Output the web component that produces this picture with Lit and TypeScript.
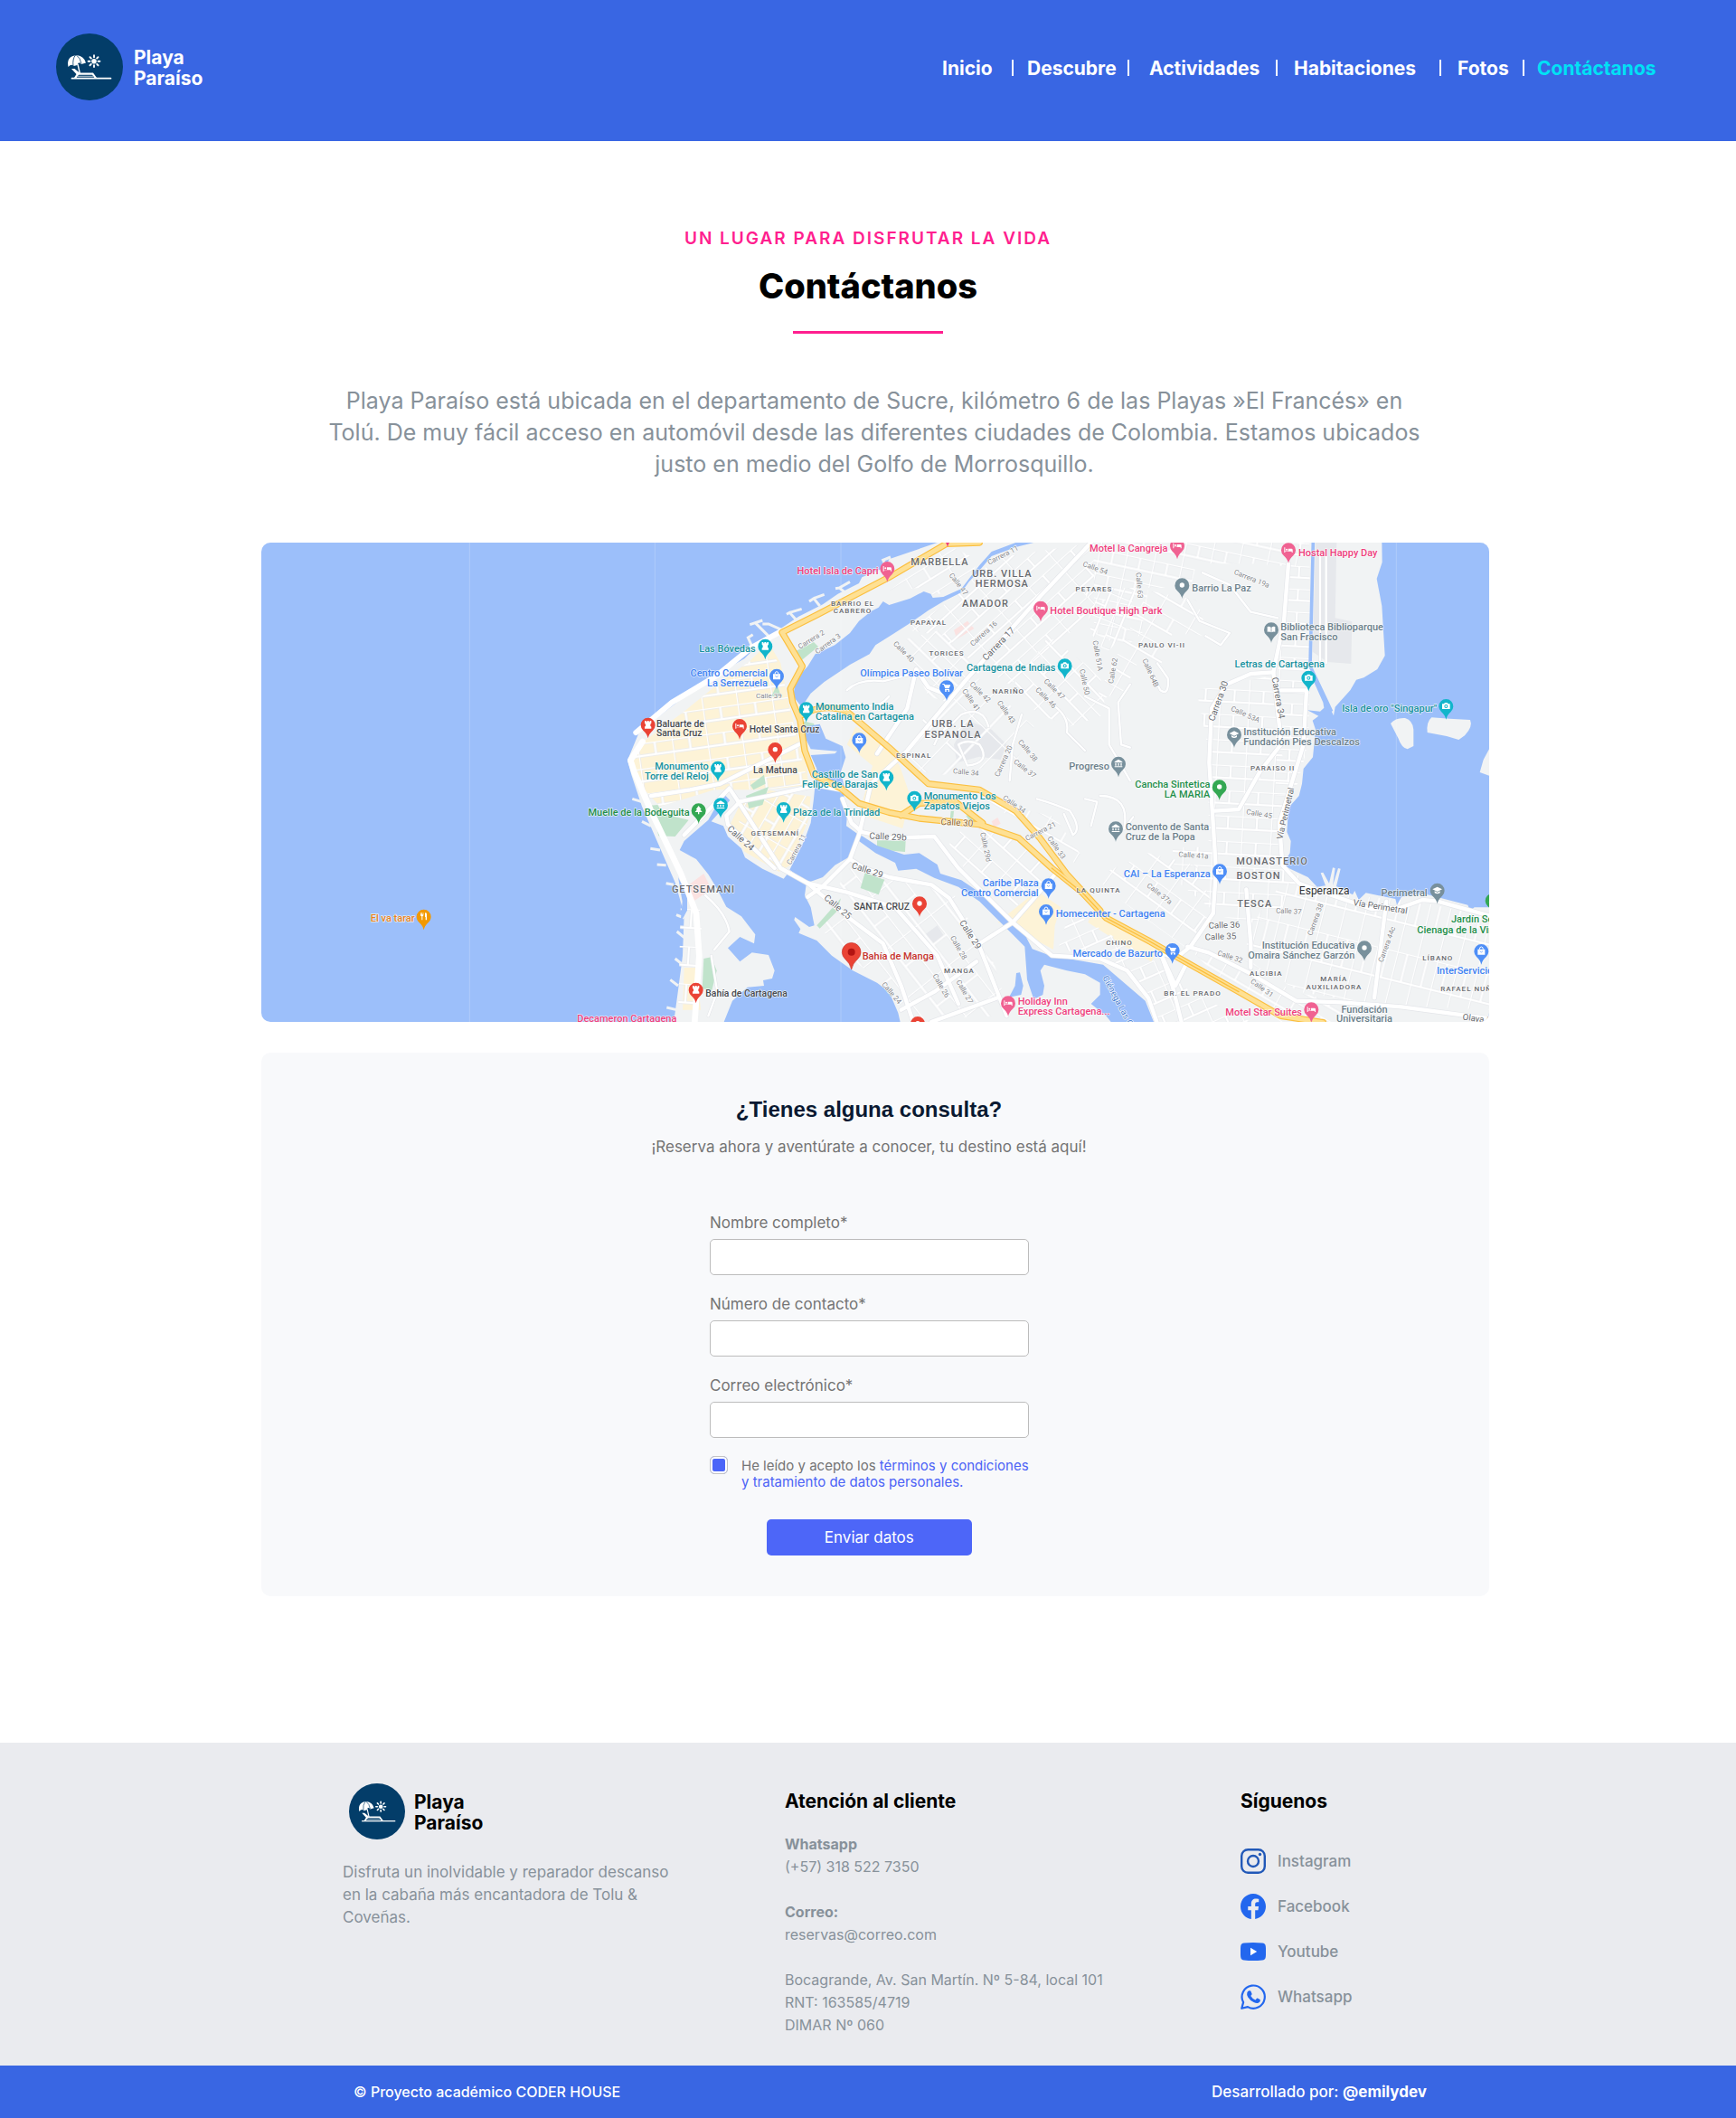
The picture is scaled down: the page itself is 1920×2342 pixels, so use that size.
import { LitElement, html, css, svg, nothing } from "lit";
import { customElement } from "lit/decorators.js";

/* ---------- Map data (map units: three per CSS pixel) ---------- */

const INK = {
  pink: "#ef3f7c",
  teal: "#16919e",
  blue: "#3f82f2",
  slate: "#6b7f8a",
  green: "#1e8e4a",
  red: "#c5322b",
  orange: "#e8811a",
  dark: "#47494d",
  area: "#67696e",
  street: "#85878c",
  sea: "#4a7fd0",
  brown: "#8b6430",
};

type Glyph = "bed" | "tower" | "bag" | "cart" | "camera" | "tree" | "dot" | "cap" | "book" | "museum" | "fork";

const PINS: [number, number, string, Glyph][] = [
  [694, 116, "#f06292", "bed"],
  [289, 373, "#12b5cb", "tower"],
  [327, 472, "#4f8ff7", "bag"],
  [425, 582, "#12b5cb", "tower"],
  [204, 638, "#ea4335", "bed"],
  [322, 716, "#ea4335", "dot"],
  [132, 778, "#12b5cb", "tower"],
  [601, 684, "#4f8ff7", "bag"],
  [691, 808, "#12b5cb", "tower"],
  [891, 510, "#4f8ff7", "cart"],
  [1203, 247, "#f06292", "bed"],
  [1283, 438, "#12b5cb", "camera"],
  [68, 918, "#34a853", "tree"],
  [141, 900, "#12b5cb", "museum"],
  [350, 914, "#12b5cb", "tower"],
  [784, 877, "#12b5cb", "camera"],
  [1229, 1167, "#4f8ff7", "bag"],
  [1221, 1253, "#4f8ff7", "bag"],
  [801, 1227, "#ea4335", "dot"],
  [59, 1513, "#ea4335", "tower"],
  [1095, 1557, "#f06292", "bed"],
  [795, 1625, "#ea4335", "dot"],
  [1656, 40, "#f06292", "bed"],
  [2025, 54, "#f06292", "bed"],
  [1672, 171, "#78909c", "dot"],
  [1968, 318, "#78909c", "book"],
  [2092, 478, "#12b5cb", "camera"],
  [1845, 666, "#78909c", "cap"],
  [2548, 572, "#12b5cb", "camera"],
  [1461, 763, "#78909c", "museum"],
  [1796, 840, "#34a853", "dot"],
  [1452, 978, "#78909c", "museum"],
  [1797, 1119, "#4f8ff7", "bag"],
  [2519, 1183, "#78909c", "cap"],
  [2702, 1217, "#34a853", "tree"],
  [2277, 1374, "#78909c", "dot"],
  [2665, 1385, "#4f8ff7", "bag"],
  [1640, 1382, "#4f8ff7", "cart"],
  [2101, 1578, "#f06292", "bed"],
  [-100, 634, "#ea4335", "tower"],
  [-844, 1270, "#f29900", "fork"],
  [894, 0, "#ef3f7c", "dot"],
];

/* Place names: text, x, baseline, colour, anchor */
const PLACES: [string, number, number, string, string][] = [
  ["Hotel Isla de Capri", 665, 135, INK.pink, "end"],
  ["Las Bóvedas", 257, 392, INK.teal, "end"],
  ["Centro Comercial", 297, 475, INK.blue, "end"],
  ["La Serrezuela", 297, 507, INK.blue, "end"],
  ["Monumento India", 456, 586, INK.teal, "start"],
  ["Catalina en Cartagena", 456, 618, INK.teal, "start"],
  ["Hotel Santa Cruz", 236, 661, INK.dark, "start"],
  ["Baluarte de", -72, 641, INK.dark, "start"],
  ["Santa Cruz", -72, 673, INK.dark, "start"],
  ["La Matuna", 322, 794, INK.dark, "middle"],
  ["Monumento", 101, 782, INK.teal, "end"],
  ["Torre del Reloj", 101, 816, INK.teal, "end"],
  ["Castillo de San", 663, 811, INK.teal, "end"],
  ["Felipe de Barajas", 663, 843, INK.teal, "end"],
  ["Olímpica Paseo Bolívar", 945, 473, INK.blue, "end"],
  ["Cartagena de Indias", 1252, 457, INK.teal, "end"],
  ["Hotel Boutique High Park", 1234, 266, INK.pink, "start"],
  ["Muelle de la Bodeguita", 38, 937, INK.green, "end"],
  ["Plaza de la Trinidad", 381, 935, INK.teal, "start"],
  ["Monumento Los", 815, 881, INK.teal, "start"],
  ["Zapatos Viejos", 815, 915, INK.teal, "start"],
  ["Caribe Plaza", 1196, 1171, INK.blue, "end"],
  ["Centro Comercial", 1196, 1204, INK.blue, "end"],
  ["Homecenter - Cartagena", 1253, 1273, INK.blue, "start"],
  ["SANTA CRUZ", 768, 1248, INK.dark, "end"],
  ["Bahía de Manga", 611, 1413, INK.red, "start"],
  ["Bahía de Cartagena", 91, 1536, INK.dark, "start"],
  ["Holiday Inn", 1127, 1562, INK.pink, "start"],
  ["Express Cartagena...", 1127, 1595, INK.pink, "start"],
  ["Mercado de Bazurto", 1608, 1404, INK.blue, "end"],
  ["Motel la Cangreja", 1624, 61, INK.pink, "end"],
  ["Hostal Happy Day", 2058, 76, INK.pink, "start"],
  ["Barrio La Paz", 1705, 191, INK.slate, "start"],
  ["Biblioteca Biblioparque", 1999, 322, INK.slate, "start"],
  ["San Fracisco", 1999, 355, INK.slate, "start"],
  ["Letras de Cartagena", 2145, 444, INK.teal, "end"],
  ["Isla de oro \"Singapur\"", 2518, 591, INK.teal, "end"],
  ["Institución Educativa", 1876, 669, INK.slate, "start"],
  ["Fundación Pies Descalzos", 1876, 703, INK.slate, "start"],
  ["Progreso", 1431, 784, INK.slate, "end"],
  ["Cancha Sintetica", 1765, 843, INK.green, "end"],
  ["LA MARIA", 1765, 876, INK.green, "end"],
  ["Convento de Santa", 1484, 983, INK.slate, "start"],
  ["Cruz de la Popa", 1484, 1016, INK.slate, "start"],
  ["CAI – La Esperanza", 1766, 1139, INK.blue, "end"],
  ["Perimetral", 2486, 1203, INK.slate, "end"],
  ["Jardín Sec", 2565, 1291, INK.green, "start"],
  ["Cienaga de la Virgen", 2452, 1326, INK.green, "start"],
  ["Institución Educativa", 2245, 1377, INK.slate, "end"],
  ["Omaira Sánchez Garzón", 2245, 1409, INK.slate, "end"],
  ["InterServicios", 2517, 1461, INK.blue, "start"],
  ["Motel Star Suites", 2070, 1600, INK.pink, "end"],
  ["Fundación", 2277, 1590, INK.slate, "middle"],
  ["Universitaria", 2277, 1620, INK.slate, "middle"],
  ["El va tarar", -874, 1287, INK.orange, "end"],
  ["Decameron Cartagena", -5, 1620, INK.pink, "end"],
];

/* District names: text, centre x, baseline, size */
const AREAS: [string, number, number, number][] = [
  ["MARBELLA", 868, 106, 33],
  ["URB. VILLA", 1075, 143, 33],
  ["HERMOSA", 1075, 178, 33],
  ["AMADOR", 1020, 242, 33],
  ["BARRIO EL", 579, 239, 24],
  ["CABRERO", 579, 264, 24],
  ["PAPAYAL", 831, 304, 24],
  ["TORICES", 891, 405, 24],
  ["NARIÑO", 1096, 531, 24],
  ["URB. LA", 912, 642, 33],
  ["ESPANOLA", 912, 677, 33],
  ["ESPINAL", 782, 745, 24],
  ["PETARES", 1380, 193, 24],
  ["PAULO VI-II", 1605, 379, 24],
  ["GETSEMANÍ", 322, 1001, 24],
  ["GETSEMANI", 84, 1191, 33],
  ["MANGA", 933, 1458, 24],
  ["LA QUINTA", 1395, 1192, 24],
  ["CHINO", 1464, 1365, 24],
  ["BR. EL PRADO", 1707, 1533, 24],
  ["PARAISO II", 1973, 785, 24],
  ["MONASTERIO", 1971, 1098, 33],
  ["BOSTON", 1926, 1146, 33],
  ["TESCA", 1913, 1240, 33],
  ["ALCIBIA", 1951, 1466, 24],
  ["MARÍA", 2176, 1485, 24],
  ["AUXILIADORA", 2176, 1511, 24],
  ["LÍBANO", 2521, 1416, 24],
  ["RAFAEL NUÑEZ", 2632, 1518, 24],
];

/* Street names: text, centre x, centre y, angle, size, colour */
const STREETS: [string, number, number, number, number, string][] = [
  ["Carrera 11", 1078, 72, -27, 24, INK.street],
  ["Calle 47", 930, 168, 52, 24, INK.street],
  ["Carrera 2", 442, 352, -32, 24, INK.street],
  ["Carrera 3", 497, 366, -36, 24, INK.street],
  ["Calle 39", 301, 539, 0, 24, INK.street],
  ["Calle 40", 748, 392, 45, 24, INK.street],
  ["Carrera 16", 1014, 332, -42, 24, INK.street],
  ["Carrera 17", 1063, 366, -46, 30, INK.area],
  ["Calle 50", 1348, 492, 78, 24, INK.street],
  ["Calle 47", 1248, 516, 45, 24, INK.street],
  ["Calle 46", 1220, 545, 45, 24, INK.street],
  ["Calle 42", 1002, 526, 45, 24, INK.street],
  ["Calle 41", 972, 553, 55, 24, INK.street],
  ["Calle 43", 1088, 592, 55, 24, INK.street],
  ["Calle 38", 1160, 720, 50, 24, INK.street],
  ["Calle 37", 1150, 780, 38, 24, INK.street],
  ["Carrera 20", 1080, 755, -66, 24, INK.street],
  ["Calle 34", 955, 792, 6, 24, INK.street],
  ["Calle 54", 1384, 115, 20, 24, INK.street],
  ["Calle 63", 1530, 172, 86, 24, INK.street],
  ["Carrera 19a", 1903, 150, 22, 24, INK.street],
  ["Calle 51A", 1392, 405, 80, 24, INK.street],
  ["Calle 62", 1443, 455, -80, 24, INK.street],
  ["Calle 64B", 1567, 462, 66, 24, INK.street],
  ["Carrera 30", 1792, 555, -70, 30, INK.area],
  ["Carrera 34", 1992, 545, 80, 30, INK.area],
  ["Calle 53A", 1882, 600, 24, 24, INK.street],
  ["Calle 24", 208, 1010, 42, 30, INK.area],
  ["Carrera 11", 393, 1048, -62, 24, INK.street],
  ["Calle 29b", 696, 1005, 3, 30, INK.area],
  ["Calle 29", 628, 1116, 18, 30, INK.area],
  ["Calle 25", 530, 1238, 40, 30, INK.area],
  ["Calle 30", 925, 958, 3, 30, INK.brown],
  ["Calle 34", 1115, 898, 35, 24, INK.street],
  ["Carrera 21", 1203, 988, -27, 24, INK.street],
  ["Calle 33", 1255, 1042, 55, 24, INK.street],
  ["Calle 29d", 1020, 1040, 78, 24, INK.street],
  ["Calle 29", 970, 1330, 58, 30, INK.area],
  ["Calle 28", 930, 1374, 60, 24, INK.street],
  ["Calle 27", 950, 1520, 60, 24, INK.street],
  ["Calle 26", 872, 1500, 60, 24, INK.street],
  ["Calle 24", 708, 1524, 50, 24, INK.street],
  ["Calle 45", 1928, 930, 10, 24, INK.street],
  ["Vía Perimetral", 2014, 928, -77, 28, INK.area],
  ["Calle 41a", 1710, 1068, 4, 24, INK.street],
  ["Calle 37a", 1597, 1195, 38, 24, INK.street],
  ["Calle 37", 2026, 1253, 3, 24, INK.street],
  ["Calle 36", 1812, 1298, -2, 29, INK.area],
  ["Calle 35", 1800, 1336, -2, 29, INK.area],
  ["Calle 32", 1831, 1404, 18, 24, INK.street],
  ["Calle 31", 1937, 1508, 36, 24, INK.street],
  ["Carrera 38", 2115, 1280, -70, 24, INK.street],
  ["Vía Perimetral", 2330, 1237, 9, 29, INK.area],
  ["Carrera 44c", 2352, 1363, -70, 24, INK.street],
  ["Ciénega Las Quintas", 1479, 1585, 62, 29, INK.sea],
  ["Olaya Herrera", 2690, 1614, 8, 29, INK.area],
  ["Esperanza", 2144, 1186, 0, 36, "#2f3134"],
];

const WATER = [
  "M1180 30L1120 30L1040 60L1000 105L965 150L940 183L880 210L845 213L838 200L815 192L770 215L700 237L680 225L665 245L640 258L600 290L570 330L520 370L455 400L430 440L390 485L382 540L410 575L440 530L485 492L540 455L570 435L635 400L655 370L710 335L765 300L830 255L880 225L940 195L965 160L1000 122L1040 75L1120 45Z",
  "M425 640L470 632L490 680L545 705L556 742L540 790L552 845L550 880L562 920L558 970L600 1000L572 1070L520 1100L480 1140L430 1158L370 1115L418 1020L440 960L450 880L460 780L440 735L520 730L528 722L440 715L418 670Z",
  "M150 862L172 885L110 955L150 970L165 1005L210 1045L222 1075L280 1112L350 1145L366 1125L425 1165L420 1200L440 1240L452 1300L435 1305L388 1272L385 1282L406 1312L400 1325L460 1350L510 1400L580 1450L660 1490L700 1520L730 1590L738 1625L150 1625L180 1550L230 1505L285 1500L282 1482L312 1476L320 1450L300 1398L245 1390L205 1420L165 1375L205 1338L252 1360L256 1330L210 1270L160 1238L130 1180L100 1130L60 1080L5 1050L20 1020L100 950Z",
  "M605 1000L660 1035L750 1065L800 1060L860 1098L870 1128L940 1150L1000 1190L1050 1230L1105 1280L1145 1320L1175 1378L1235 1400L1350 1420L1410 1430L1480 1490L1550 1550L1580 1625L1440 1625L1420 1600L1370 1560L1400 1530L1400 1490L1350 1462L1290 1450L1215 1430L1202 1450L1215 1500L1210 1530L1180 1545L1158 1480L1150 1370L1110 1330L1060 1280L1000 1220L930 1172L850 1142L790 1112L730 1118L720 1092L655 1060L600 1020Z",
  "M1122 1458L1134 1456L1145 1500L1138 1530L1098 1538L1118 1500Z",
  "M2335 30L2336 95L2318 150L2335 240L2345 405L2320 450L2275 478L2250 485L2230 520L2180 575L2175 604L2110 470L2098 430L2104 480L2140 560L2143 578L2130 590L2088 586L2125 605L2105 620L2115 650L2106 742L2075 780L2070 830L2060 870L2025 910L2020 990L2033 1020L2030 1060L2005 1100L2090 1140L2120 1172L2148 1168L2132 1126L2140 1124L2160 1160L2172 1108L2180 1110L2172 1168L2190 1110L2198 1112L2184 1170L2238 1198L2245 1185L2258 1215L2282 1192L2380 1212L2385 1232L2400 1205L2470 1193L2620 1232L2628 1252L2642 1240L2700 1240L2700 30Z",
  "M0 1140L30 1200L30 1250L8 1290L14 1220Z",
];

const YELLOW = [
  "M300 362L340 430L362 540L390 650L425 760L432 835L280 850L120 850L-60 905L-112 850L-152 760L-112 688L20 590L150 485L235 425Z",
  "M290 850L440 872L432 950L372 1100L335 1122L220 1055L170 970L205 900Z",
  "M590 640L690 705L735 770L770 870L745 978L600 930L645 770L560 700Z",
  "M1060 1290L1190 1185L1270 1240L1250 1300L1245 1380L1190 1350L1110 1300Z",
  "M1380 1240L1600 1360L1570 1420L1500 1380L1360 1290Z",
  "M20 1440L62 1440L75 1580L15 1580Z",
];

const GREEN = [
  "M-92 902L-68 900L-50 930L35 950L-10 1005L-65 1003Z",
  "M225 870L300 840L280 900L235 912Z",
  "M310 540L328 500L342 540Z",
  "M390 390L450 360L465 375L410 420Z",
  "M405 620L450 630L455 645L415 660Z",
  "M620 1125L685 1148L665 1198L605 1176Z",
  "M660 1018L755 1018L753 1056L660 1048Z",
  "M460 1300L540 1210L530 1250L470 1310Z",
  "M85 1410L110 1405L128 1450L112 1515L80 1510Z",
  "M240 835L285 800L290 830L250 850Z",
  "M905 920L915 920L912 950L902 950Z",
  "M955 935L985 930L1000 960L965 950Z",
];

const ROSE = ["M915 320L960 290L982 315L925 350Z", "M15 1180L85 1128L110 1180L50 1220Z", "M1040 955L1060 942L1070 962L1048 975Z"];

const GREY = [
  "M2115 30L2185 30L2180 280L2236 292L2233 432L2155 426L2105 392Z",
  "M960 620L1040 650L1090 700L1070 750L1000 740L925 760L915 700Z",
  "M820 1330L860 1300L885 1340L850 1360Z",
];

/* Street grids: polygon, angle, cell width, cell height */
const GRIDS: [string, number, number, number][] = [
  ["M700 190L900 40L1000 90L940 180L850 205L800 180Z", -32, 70, 44],
  ["M760 320L900 225L1000 130L1060 80L1380 30L1380 250L1230 400L1100 500L980 430L880 340Z", -42, 62, 38],
  ["M720 360L870 320L1000 460L900 560L830 540L790 450Z", 44, 60, 40],
  ["M300 380L340 440L362 540L395 690L432 830L280 850L120 850L-60 905L-112 850L-152 760L-112 688L20 590L150 485L235 425Z", -8, 58, 42],
  ["M290 850L440 872L432 950L372 1100L335 1122L190 1000L220 890Z", -60, 52, 40],
  ["M560 1110L900 1170L1050 1430L1100 1600L760 1610L700 1500L600 1430L470 1310Z", 52, 84, 58],
  ["M1380 30L2090 30L2050 110L1900 100L1720 100L1700 180L1560 180L1540 330L1480 380L1380 330Z", 12, 46, 40],
  ["M1350 180L1520 180L1480 330L1420 400L1370 330Z", -68, 44, 36],
  ["M1560 190L1720 220L1760 340L1640 330L1600 440L1530 420L1480 520L1380 560Z", 30, 58, 48],
  ["M2040 30L2095 30L2098 430L2090 700L2055 830L1980 920L1990 460L2010 290Z", 3, 48, 38],
  ["M1720 520L1980 470L2000 720L2040 850L2000 1030L2010 1100L2080 1150L1950 1300L1800 1270L1650 1150L1640 1040L1760 1040L1760 720Z", 3, 48, 42],
  ["M2010 1150L2100 1190L2450 1220L2691 1270L2691 1580L2300 1560L2060 1520L1880 1400L1900 1300Z", 14, 34, 96],
  ["M1900 1420L2040 1520L2240 1560L2300 1620L2000 1620L1760 1440L1700 1380Z", 30, 52, 40],
  ["M1380 1140L1560 1060L1720 1100L1780 1250L1680 1370L1500 1240Z", 36, 48, 60],
  ["M1300 1250L1600 1430L1700 1520L1900 1620L1600 1620L1540 1500L1420 1400L1260 1380Z", -24, 48, 44],
  ["M960 960L1150 1010L1250 1130L1180 1180L1100 1260L960 1130L900 1030Z", 42, 60, 54],
  ["M1230 340L1400 470L1420 600L1300 640L1200 600L1100 520Z", 46, 62, 42],
  ["M820 600L1000 480L1180 640L1120 760L880 800L740 780Z", -46, 120, 70],
  ["M1000 880L1250 940L1380 1130L1260 1060L1140 960Z", 30, 70, 50],
  ["M10 1160L80 1260L60 1600L0 1600Z", 4, 44, 62],
];

const MINOR = [
  "M560 520Q600 480 680 490L760 470",
  "M590 560Q660 590 700 540",
  "M1560 440L1600 520Q1630 540 1625 480L1590 430",
  "M1500 500L1460 560L1470 700L1500 710",
  "M1740 130L1830 170L1900 260L1990 280",
  "M1690 220L1730 290L1830 330L1800 370L1750 340",
  "M1350 540L1430 580L1430 700L1500 820",
  "M1350 880L1390 890L1370 970",
  "M1400 870Q1500 870 1480 980L1510 940",
  "M1230 560Q1300 600 1290 660L1350 720",
  "M1140 600L1110 700L1100 820",
  "M1190 880Q1260 900 1300 920Q1340 980 1310 1000L1280 930",
  "M850 700Q870 650 900 640L940 600Q1010 570 1030 640",
  "M930 700Q960 680 1000 700Q1040 760 960 770Z",
  "M90 1200Q160 1260 170 1320L120 1380",
  "M100 1600L130 1520L110 1400",
  "M2130 60L2130 420M2150 60L2150 430",
];

const WHITE_MAJOR = [
  "M1370 30L1200 210L960 480L760 720L640 830L600 1000L570 1080L480 1170L430 1205",
  "M790 450L830 510L880 530M790 450L760 580L660 730",
  "M-90 870L40 850L140 830L300 750L400 700",
  "M200 890L300 870L460 835L540 850",
  "M20 1000L170 845L200 890L340 1110L430 1160L560 1270L680 1360L740 1500L780 1620",
  "M160 935L200 895M160 935L165 965L320 1110",
  "M545 880L575 960L610 990L700 1010L850 1005L930 1110L1110 1290L1240 1400L1400 1410L1490 1450L1560 1540L1590 1625",
  "M570 1080L620 1110L700 1140L840 1165L900 1210L1000 1370L1090 1600",
  "M430 1160L560 1190L720 1240L860 1400L930 1560",
  "M1000 1360L1110 1290L1260 1120",
  "M2025 100L2010 290L1975 460L1995 640L2000 700L1930 790L1860 915L1780 920",
  "M1775 1260L1785 1120L1775 960L1762 760L1770 580L1820 500L1900 465L1975 460",
  "M2000 520L2085 520L2075 700L1995 960L2005 1100L2060 1160L2140 1190L2300 1245L2400 1240L2470 1215L2520 1220L2700 1270",
  "M1775 1260L1700 1370L1650 1410L1600 1390L1650 1500L1690 1420L1720 1440",
  "M1690 1370L1760 1390L1900 1460L2050 1550L2200 1555L2400 1570L2700 1610",
  "M1885 1180L1900 1360L1900 1440",
  "M1600 1390L1640 1500L1670 1620",
  "M2350 1220L2310 1540",
  "M740 1580L850 1520L990 1420M840 1620L1060 1540",
];

const COAST_ROAD = "M-140 660L-20 560L130 470L240 380L340 325";
const WEST_ROAD = "M-118 690L-158 752L-146 790L-90 920L10 1130L60 1260L70 1400L55 1620";

const HIGHWAYS = [
  "M1000 30L890 34L700 145L460 270L345 328L412 440L372 515L380 560L405 620L420 720L450 800L540 845L600 895L700 925L800 945L1000 965L1130 1010L1240 1110L1340 1190L1420 1275L1560 1350L1700 1430L1860 1520L2000 1600L2140 1622",
  "M405 605Q480 560 560 590L700 710L830 830L1000 850L1120 920L1200 1010L1290 1130L1400 1250",
  "M740 935L800 895L920 890L1010 960",
];

const glyph = (kind: Glyph) => {
  switch (kind) {
    case "bed":
      return svg`<path d="M-14-8v17h3v-4h22v4h3v-9q0-4-4-4H-1V4H-11V-8z"/><circle cx="-6" cy="-1" r="3"/>`;
    case "tower":
      return svg`<path d="M-11-13h5v4h3v-4h6v4h3v-4h5v8l-3 3v6l3 3v6h-22v-6l3-3v-6l-3-3z"/>`;
    case "bag":
      return svg`<path d="M-12-6h24v18h-24z"/><path d="M-6-6q0-8 6-8t6 8" fill="none" stroke="#fff" stroke-width="3"/><path d="M-5 0q5 8 10 0" fill="none" stroke="#4f8ff7" stroke-width="2"/>`;
    case "cart":
      return svg`<path d="M-14-12h6l2 4H13L8 4H-5L-10-9h-4zM-6 6H9v3H-6z"/><circle cx="-3" cy="12" r="3"/><circle cx="7" cy="12" r="3"/>`;
    case "camera":
      return svg`<path d="M-13-7h6l3-4h8l3 4h6v17h-26z"/><circle cy="1" r="6" fill="#12b5cb"/><circle cy="1" r="3"/>`;
    case "tree":
      return svg`<path d="M0-15L9-3H5l7 9H2v7h-4V6h-10l7-9h-4z"/>`;
    case "cap":
      return svg`<path d="M0-11L16-3 0 5-16-3zM-9 3L0 8 9 3v6q-9 6-18 0z"/>`;
    case "book":
      return svg`<path d="M-13-9q8-2 12 2v17q-5-4-12-2zM13-9Q5-11 1-7v17q5-4 12-2z"/>`;
    case "museum":
      return svg`<path d="M0-14L13-6v3h-26v-3zM-11-1h4v8h-4zM-2-1h4v8h-4zM7-1h4v8H7zM-13 9h26v3h-26z"/>`;
    case "fork":
      return svg`<path d="M-11-12h2v6h2v-6h2v6h2v-6h2v8q0 3-3 4v12h-3V0q-4-1-4-4zM4-12q6 0 6 4v20H6V2H4z"/>`;
    default:
      return svg`<circle r="8"/>`;
  }
};

@customElement("location-map")
export class LocationMap extends LitElement {
  static styles = css`
    :host {
      display: block;
    }
    .map {
      display: block;
      width: 100%;
      height: auto;
      border-radius: 10px;
      font-family: Roboto, sans-serif;
    }
    .label {
      font-weight: 500;
    }
    .label,
    .area,
    .street {
      paint-order: stroke;
      stroke: #ffffff;
      stroke-opacity: 0.75;
      stroke-width: 4px;
      stroke-linejoin: round;
    }
    .area {
      letter-spacing: 3px;
      font-weight: 500;
      text-anchor: middle;
    }
    .street {
      text-anchor: middle;
      dominant-baseline: central;
      stroke-opacity: 0.9;
    }
    .roads {
      fill: none;
      stroke-linejoin: round;
      stroke-linecap: round;
    }
  `;

  render() {
    return html`
      <svg class="map" viewBox="-1383 30 4074 1590" role="img" aria-label="Mapa de Cartagena y Bahía de Manga">
        <defs>
          ${GRIDS.map(
            ([, angle, w, h], i) => svg`
            <pattern id="grid${i}" width=${w * 2} height=${h * 2} patternUnits="userSpaceOnUse" patternTransform="rotate(${angle})">
              <path d="M0 0H${w * 2}M0 ${h}H${w * 2}M0 0V${h * 2}M${w} 0V${h}" stroke="#e2e4e8" stroke-width="10" fill="none"/>
              <path d="M0 0H${w * 2}M0 ${h}H${w * 2}M0 0V${h * 2}M${w} 0V${h}" stroke="#ffffff" stroke-width="7" fill="none"/>
            </pattern>`,
          )}
        </defs>
        <rect x="-1383" y="30" width="4074" height="1590" fill="#9cbffa" />
        <path
          d="M860 30L700 85L690 110L610 145L600 165L530 200L480 235L400 275L330 322L270 365L220 415L150 455L60 512L-20 572L-130 660L-168 752L-155 800L-120 905L-70 1020L-10 1157L20 1262L15 1400L0 1515L-15 1625H2700V30Z"
          fill="#f1f3f4"
        />
        <path
          d="M300 340L255 295M238 302L280 288M345 320L300 300L280 300M395 290L370 262L360 268M370 262L410 250M470 240L450 215L435 225M450 215L485 202M560 200L535 180L522 182M535 180L570 160M690 110L680 88L705 78M250 385L232 345L248 335M-120 890L-152 880M-90 970L-120 955M-60 1050L-92 1045M-40 1100L-70 1098M-15 1165L-40 1160M20 1275L-6 1265M20 1340L-4 1320M15 1430L-10 1410M0 1500L-26 1480M-5 1580L-38 1572"
          fill="none"
          stroke="#f1f3f4"
          stroke-width="9"
        />
        ${YELLOW.map((d) => svg`<path d=${d} fill="#fdf3d7"/>`)}
        ${GREY.map((d) => svg`<path d=${d} fill="#e6e8ec"/>`)}
        ${ROSE.map((d) => svg`<path d=${d} fill="#fbe2e1"/>`)}
        ${GRIDS.map(([d], i) => svg`<path d=${d} fill="url(#grid${i})"/>`)}
        ${GREEN.map((d) => svg`<path d=${d} fill="#c0e3cb"/>`)}
        ${WATER.map((d) => svg`<path d=${d} fill="#9cbffa"/>`)}
        <path d="M2107 30L2097 440L2168 590" fill="none" stroke="#9cbffa" stroke-width="11" />
        <g fill="#f1f3f4">
          <path d="M2364 630Q2380 610 2412 612Q2438 620 2440 650V705L2420 715Q2400 710 2390 680Z" />
          <path d="M2500 610L2560 614L2628 618Q2638 640 2610 670L2590 684L2550 672L2486 660Q2482 625 2500 610Z" />
          <path d="M2691 715L2672 750L2660 792L2691 803Z" />
        </g>
        <g class="roads">
          ${MINOR.map((d) => svg`<path d=${d} stroke="#e2e4e8" stroke-width="10"/><path d=${d} stroke="#ffffff" stroke-width="7"/>`)}
          ${WHITE_MAJOR.map((d) => svg`<path d=${d} stroke="#e4e6ea" stroke-width="17"/>`)}
          ${WHITE_MAJOR.map((d) => svg`<path d=${d} stroke="#ffffff" stroke-width="13"/>`)}
          <path d=${COAST_ROAD} stroke="#ffffff" stroke-width="18" />
          <path d=${WEST_ROAD} stroke="#ffffff" stroke-width="20" />
          ${HIGHWAYS.map((d) => svg`<path d=${d} stroke="#fbbf3f" stroke-width="22"/>`)}
          ${HIGHWAYS.map((d) => svg`<path d=${d} stroke="#fee093" stroke-width="15"/>`)}
          <path d="M1240 1110L1340 1190L1420 1275L1560 1350L1700 1430L1860 1520" stroke="#fbbf3f" stroke-width="4" />
        </g>
        <path d="M-692 30V1620M-77 30V600M540 30V1620M2383 30V1200" stroke="#ffffff" stroke-opacity="0.2" stroke-width="3" />
        ${STREETS.map(
          ([text, x, y, angle, size, color]) => svg`
          <text class="street" transform="translate(${x} ${y}) rotate(${angle})" font-size=${size} fill=${color}>${text}</text>`,
        )}
        ${AREAS.map(([text, x, y, size]) => svg`<text class="area" x=${x} y=${y} font-size=${size} fill=${INK.area}>${text}</text>`)}
        ${PLACES.map(
          ([text, x, y, color, anchor]) => svg`
          <text class="label" x=${x} y=${y} font-size=${color === INK.dark ? 31 : 33} fill=${color} text-anchor=${anchor}>${text}</text>`,
        )}
        ${PINS.map(
          ([x, y, color, kind]) => svg`
          <g transform="translate(${x} ${y})">
            <path d="M0 45Q-3 30-16 19A24 24 0 1 1 16 19Q3 30 0 45Z" fill=${color}/>
            <g fill="#ffffff">${glyph(kind)}</g>
          </g>`,
        )}
        <g transform="translate(575 1388)">
          <path d="M0 58Q-4 38-20 24A31 31 0 1 1 20 24Q4 38 0 58Z" fill="#ea4335" stroke="#c5322b" stroke-width="2" />
          <circle r="12" fill="#b31412" />
        </g>
      </svg>
    `;
  }
}

/* ---------- Brand ---------- */

@customElement("brand-logo")
export class BrandLogo extends LitElement {
  static styles = css`
    :host {
      display: block;
    }
    svg {
      display: block;
      width: 100%;
      height: auto;
    }
  `;

  render() {
    return html`
      <svg viewBox="0 0 74 74" aria-hidden="true">
        <circle cx="37" cy="37" r="37" fill="#033d69" />
        <path d="M13.500 37Q11 25 23 24Q31 25 33 32.500L28 34Q25 30 23.500 35L19.500 36Q17 33 13.500 37Z" fill="#fff" />
        <path d="M19 36Q18 28 21.500 24M28 33.500Q27 27 22.500 24" fill="none" stroke="#033d69" stroke-width="0.800" />
        <path d="M24 34L26.500 45" stroke="#fff" stroke-width="1.400" />
        <path d="M17 39H20.500L26 43.500H41L45 49H42.500L40 45.800H25L22.500 49H20L22.500 45Z" fill="#fff" />
        <path d="M24 47.300H41" stroke="#fff" stroke-width="0.700" />
        <path d="M17.500 49.700H60.500" stroke="#fff" stroke-width="1.700" stroke-linecap="round" />
        <circle cx="42" cy="30.700" r="2.800" fill="#fff" />
        ${[0, 45, 90, 135, 180, 225, 270, 315].map(
          (a) => svg`<path d="M42 26.200V24.300" stroke="#fff" stroke-width="1.900" stroke-linecap="round" transform="rotate(${a} 42 30.700)"/>`,
        )}
      </svg>
    `;
  }
}

/* ---------- Page ---------- */

const NAV = ["Inicio", "Descubre", "Actividades", "Habitaciones", "Fotos", "Contáctanos"];

const FIELDS = [
  { id: "nombre", label: "Nombre completo*", type: "text" },
  { id: "telefono", label: "Número de contacto*", type: "tel" },
  { id: "correo", label: "Correo electrónico*", type: "email" },
];

const SOCIAL = [
  {
    name: "Instagram",
    icon: svg`<g fill="none" stroke="#2158b8" stroke-width="2.4"><rect x="1.200" y="1.200" width="25.600" height="25.600" rx="7"/><circle cx="14" cy="14" r="6"/></g><circle cx="21.500" cy="6.500" r="1.700" fill="#2158b8"/>`,
  },
  {
    name: "Facebook",
    icon: svg`<path transform="scale(1.75)" fill="#2367ee" d="M16 8.049c0-4.446-3.582-8.05-8-8.05C3.58 0-.002 3.603-.002 8.05c0 4.017 2.926 7.347 6.75 7.951v-5.625h-2.03V8.05H6.75V6.275c0-2.017 1.195-3.131 3.022-3.131.876 0 1.791.157 1.791.157v1.98h-1.009c-.993 0-1.303.621-1.303 1.258v1.51h2.218l-.354 2.326H9.25V16c3.824-.604 6.75-3.934 6.75-7.951"/>`,
  },
  {
    name: "Youtube",
    icon: svg`<path fill="#2367ee" d="M4 4.500Q14 3.500 24 4.500Q27.400 4.800 27.800 8Q28.400 14 27.800 20Q27.400 23.200 24 23.500Q14 24.500 4 23.500Q.6 23.200.2 20Q-.4 14 .2 8Q.6 4.800 4 4.500Z"/><path fill="#fff" d="M11 9.800L18.200 14 11 18.200Z"/>`,
  },
  {
    name: "Whatsapp",
    icon: svg`<path fill="none" stroke="#2367ee" stroke-width="2.200" stroke-linejoin="round" d="M1.300 26.800L3.100 20.100A12.600 12.600 0 1 1 8 25.100Z"/><path fill="#2367ee" d="M9.300 7.300h1.400q.5 0 .7.5l1.200 2.900q.2.500-.2.900l-1.100 1.400q1.900 3.300 5.200 4.500l1.500-1.700q.3-.4.800-.2l2.700 1.300q.5.300.4.900-.2 2.400-2.300 3-2.100.6-5-.8-3.900-1.900-6.300-5.600-1.700-2.700-1-4.800.6-1.800 2-2.300z"/>`,
  },
];

@customElement("app-root")
export class AppRoot extends LitElement {
  static styles = css`
    :host {
      display: block;
      background: #ffffff;
      color: #000000;
      font-family: Inter, "Open Sans", sans-serif;
      font-size: 17px;
      line-height: 25px;
    }
    * {
      box-sizing: border-box;
    }
    h1,
    h2,
    h3,
    p,
    ul,
    address {
      margin: 0;
      padding: 0;
      font-style: normal;
      list-style: none;
    }
    a {
      color: inherit;
      text-decoration: none;
    }

    .header {
      display: flex;
      justify-content: space-between;
      align-items: flex-start;
      padding: 37px 86px 45px 62px;
      background: #3966e3;
      color: #ffffff;
    }
    .brand {
      display: flex;
      align-items: center;
      gap: 12px;
      font-size: 21px;
      font-weight: 700;
      line-height: 23px;
    }
    .brand-name {
      padding-top: 2px;
    }
    .logo {
      width: 74px;
    }
    .nav {
      display: grid;
      grid-template-columns: 77px 17px 111px 24px 140px 20px 161px 20px 72px 16px 134px;
      padding-top: 26px;
      font-size: 21px;
      font-weight: 700;
      line-height: 26px;
    }
    .nav-sep {
      width: 2px;
      height: 18px;
      margin-top: 3px;
      background: #ffffff;
    }
    .current {
      color: #00e1f5;
    }

    .intro {
      display: flex;
      flex-direction: column;
      align-items: center;
      padding-top: 96px;
      text-align: center;
    }
    .eyebrow {
      color: #ff1f8f;
      font-size: 19px;
      font-weight: 600;
      letter-spacing: 2px;
      line-height: 24px;
    }
    .title {
      margin-top: 18px;
      font-size: 38px;
      font-weight: 800;
      line-height: 44px;
    }
    .rule {
      width: 166px;
      height: 3px;
      margin-top: 28px;
      background: #ff1f8f;
    }
    .lead {
      margin-top: 57px;
      padding-left: 14px;
      color: #87919a;
      font-size: 25px;
      line-height: 35px;
    }

    .content {
      display: grid;
      gap: 34px;
      padding: 69px 273px 162px 289px;
    }

    .card {
      display: flex;
      flex-direction: column;
      align-items: center;
      padding: 48px 14px 45px 0;
      border-radius: 10px;
      background: #f8f9fb;
      color: #747474;
    }
    .card-title {
      color: #0a1931;
      font-family: "Liberation Sans", Arial, sans-serif;
      font-size: 24px;
      line-height: 30px;
    }
    .card-text {
      margin-top: 14px;
      line-height: 24px;
    }
    .form {
      display: grid;
      gap: 20px;
      width: 352px;
      max-width: 100%;
      margin-top: 60px;
    }
    .field {
      display: grid;
      gap: 6px;
      line-height: 24px;
    }
    .input {
      width: 100%;
      height: 40px;
      padding: 0 12px;
      border: 1px solid #bcbcbc;
      border-radius: 5px;
      background: #ffffff;
      font: inherit;
    }
    .terms {
      display: grid;
      grid-template-columns: 20px 1fr;
      gap: 15px;
      font-size: 15px;
      line-height: 18px;
    }
    .terms-label {
      padding-top: 2px;
      white-space: nowrap;
    }
    .terms-link {
      color: #4c63f6;
    }
    .check {
      appearance: none;
      width: 20px;
      height: 20px;
      margin: 0;
      border: 1px solid #c4c4c4;
      border-radius: 5px;
      background: #ffffff;
    }
    .check:checked {
      box-shadow: inset 0 0 0 2px #ffffff;
      background: #4c66f8;
    }
    .submit {
      justify-self: center;
      width: 227px;
      height: 40px;
      margin-top: 12px;
      border: 0;
      border-radius: 5px;
      background: #4d66f8;
      color: #ffffff;
      font: inherit;
    }

    .footer {
      display: grid;
      grid-template-columns: 489fr 504fr 269fr;
      padding: 45px 279px 32px 379px;
      background: #eaebef;
      color: #87919a;
    }
    .footer .brand {
      gap: 10px;
      margin-left: 7px;
      color: #000000;
    }
    .footer .logo {
      width: 62px;
    }
    .about {
      margin-top: 24px;
    }
    .column {
      padding-top: 8px;
    }
    .footer-title {
      color: #000000;
      font-size: 21px;
      font-weight: 700;
      line-height: 24px;
    }
    .contact {
      display: grid;
      gap: 25px;
      margin-top: 23px;
      font-size: 16px;
    }
    .social {
      display: grid;
      gap: 20px;
      margin-top: 39px;
      font-weight: 500;
    }
    .social-link {
      display: flex;
      align-items: center;
      gap: 13px;
      height: 30px;
    }
    .social-icon {
      width: 28px;
      height: 28px;
    }

    .legal {
      display: flex;
      justify-content: space-between;
      padding: 17px 342px 16px 391px;
      background: #3966e3;
      color: #ffffff;
      font-size: 16px;
      font-weight: 500;
    }
    .credit {
      font-size: 17px;
    }
  `;

  private brand() {
    return html`
      <a class="brand" href="#inicio">
        <brand-logo class="logo"></brand-logo>
        <span class="brand-name">Playa<br />Paraíso</span>
      </a>
    `;
  }

  render() {
    return html`
      <header class="header">
        ${this.brand()}
        <nav class="nav" aria-label="Principal">
          ${NAV.map(
            (item, i) => html`
              ${i > 0 ? html`<span class="nav-sep"></span>` : nothing}
              <a class=${i === NAV.length - 1 ? "current" : ""} href="#${item.toLowerCase()}">${item}</a>
            `,
          )}
        </nav>
      </header>

      <main>
        <section class="intro">
          <p class="eyebrow">UN LUGAR PARA DISFRUTAR LA VIDA</p>
          <h1 class="title">Contáctanos</h1>
          <div class="rule"></div>
          <p class="lead">
            Playa Paraíso está ubicada en el departamento de Sucre, kilómetro 6 de las Playas »El Francés» en<br />
            Tolú. De muy fácil acceso en automóvil desde las diferentes ciudades de Colombia. Estamos ubicados<br />
            justo en medio del Golfo de Morrosquillo.
          </p>
        </section>

        <div class="content">
          <location-map></location-map>

          <section class="card">
            <h2 class="card-title">¿Tienes alguna consulta?</h2>
            <p class="card-text">¡Reserva ahora y aventúrate a conocer, tu destino está aquí!</p>
            <form class="form">
              ${FIELDS.map(
                (f) => html`
                  <div class="field">
                    <label for=${f.id}>${f.label}</label>
                    <input class="input" id=${f.id} name=${f.id} type=${f.type} />
                  </div>
                `,
              )}
              <div class="terms">
                <input class="check" id="terminos" type="checkbox" checked />
                <label class="terms-label" for="terminos">
                  He leído y acepto los
                  <a class="terms-link" href="#terminos">términos y condiciones<br />y tratamiento de datos personales.</a>
                </label>
              </div>
              <button class="submit" type="button">Enviar datos</button>
            </form>
          </section>
        </div>
      </main>

      <footer>
        <div class="footer">
          <section>
            ${this.brand()}
            <p class="about">
              Disfruta un inolvidable y reparador descanso<br />en la cabaña más encantadora de Tolu &amp;<br />Coveñas.
            </p>
          </section>
          <section class="column">
            <h3 class="footer-title">Atención al cliente</h3>
            <address class="contact">
              <p><strong>Whatsapp</strong><br />(+57) 318 522 7350</p>
              <p><strong>Correo:</strong><br />reservas@correo.com</p>
              <p>Bocagrande, Av. San Martín. Nº 5-84, local 101<br />RNT: 163585/4719<br />DIMAR Nº 060</p>
            </address>
          </section>
          <section class="column">
            <h3 class="footer-title">Síguenos</h3>
            <ul class="social">
              ${SOCIAL.map(
                (s) => html`
                  <li>
                    <a class="social-link" href="#${s.name.toLowerCase()}">
                      <svg class="social-icon" viewBox="0 0 28 28" aria-hidden="true">${s.icon}</svg>
                      ${s.name}
                    </a>
                  </li>
                `,
              )}
            </ul>
          </section>
        </div>
        <div class="legal">
          <span>© Proyecto académico CODER HOUSE</span>
          <span class="credit">Desarrollado por: <strong>@emilydev</strong></span>
        </div>
      </footer>
    `;
  }
}
